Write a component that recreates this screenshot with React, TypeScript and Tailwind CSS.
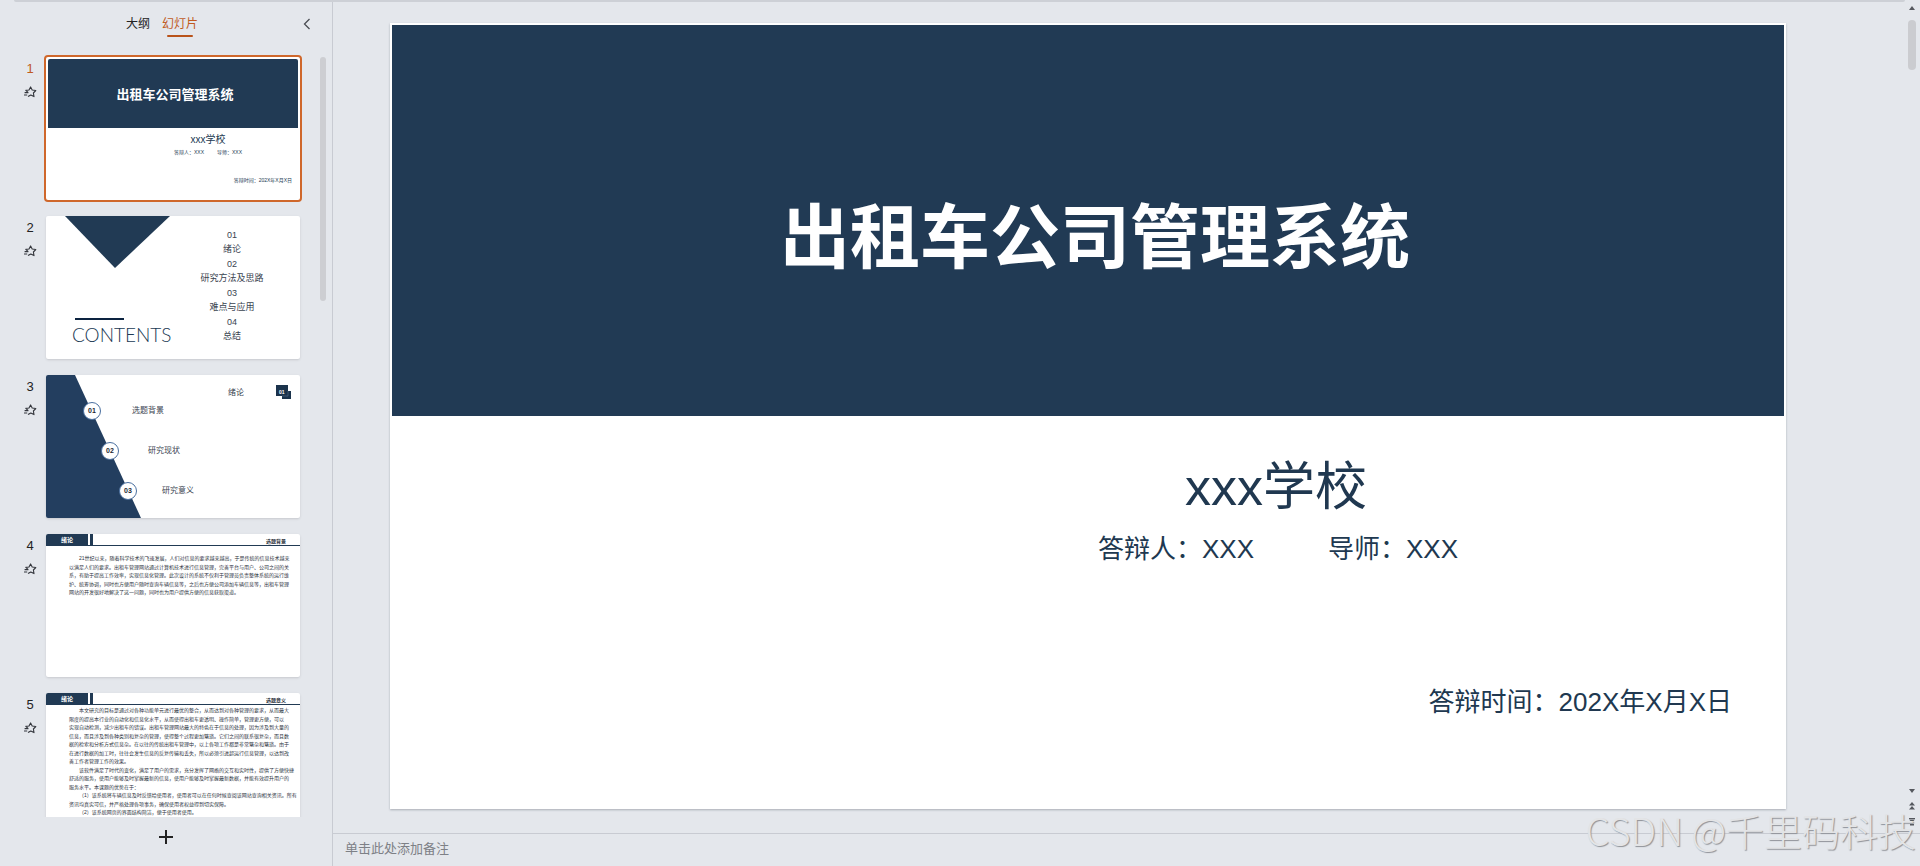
import type { ReactNode } from 'react';

const goals = [
  { no: '01', label: '选题背景', row: 'ml-[37px] gap-[31px]' },
  { no: '02', label: '研究现状', row: 'ml-[55px] gap-[29px]' },
  { no: '03', label: '研究意义', row: 'ml-[73px] gap-[25px]' },
];

const contents = ['01', '绪论', '02', '研究方法及思路', '03', '难点与应用', '04', '总结'];

const background = [
  { text: '21世纪以来，随着科学技术的飞速发展，人们对信息的要求越来越高，于是传统的信息技术越来', indent: true },
  { text: '以满足人们的要求。出租车管理网站通过计算机技术进行信息管理，完善平台与用户、公司之间的关' },
  { text: '系，有助于提高工作效率，实现信息化管理。此次设计的系统不仅利于管理员负责整体系统的运行维' },
  { text: '护、统筹协调，同时也方便用户随时查询车辆信息等，之后也方便公司添加车辆信息等，出租车管理' },
  { text: '网站的开发很好地解决了这一问题，同时也为用户提供方便的信息获取渠道。' },
];

const meaning = [
  { text: '本文研究的目标是通过对各种功能单元进行最优的整合，从而达到对各种管理的要求，从而最大', indent: true },
  { text: '限度的提高本行业的自动化和信息化水平，从而使得出租车更透明、操作简单，管理更方便，可以' },
  { text: '实现自动检测，减少出租车的错误。出租车管理网站最大的特色在于信息的处理，因为涉及到大量的' },
  { text: '信息，而且涉及到各种类别和复杂的管理，使得整个过程更加繁琐。它们之间的联系很复杂，而且数' },
  { text: '据的检索和分析方式信息杂。在以往的传统出租车管理中，以上各项工作都是非常繁杂和繁琐。由于' },
  { text: '在进行数据的加工时，往往会发生信息的反复传输和丢失，所以必须引进超运行信息管理，以达到改' },
  { text: '善工作者管理工作的效果。' },
  { text: '该软件满足了时代的变化，满足了用户的需求，充分发挥了网络的交互和实时性，提供了方便快捷', indent: true },
  { text: '舒适的服务，使用户能够及时掌握最新的信息，使用户能够及时掌握最新数据，并能有效提升用户的' },
  { text: '服务水平。本课题的优势在于：' },
  { text: '（1）该系统将车辆信息及时反馈给使用者，使用者可以在任何时候查阅该网站查询相关资讯。所有', indent: true },
  { text: '资讯均真实可信，并严格处理各项事务，确保使用者权益得到切实保障。' },
  { text: '（2）该系统网页的界面结构简洁，便于使用者使用。', indent: true },
];

const AnimationIcon = () => (
  <svg width="13" height="12" viewBox="0 0 13 12" fill="none" stroke="#33363c" strokeWidth="1.1" strokeLinejoin="round">
    <path d="M4 6.4 1.8 4.4 5 4 6.6 0.9 8.2 4 11.8 4.5 9.4 7 10 10.6 6.8 9 4 10.6" />
    <path d="M0.6 6.6h3.8M0 9h3.2" />
  </svg>
);

const TitleThumb = () => (
  <div className="flex h-full flex-col overflow-hidden text-[#203850]">
    <div className="flex h-[69px] items-center justify-center rounded-t-xs bg-[#213a54] pl-1 pt-0.5">
      <span className="text-[13px] font-bold text-white">出租车公司管理系统</span>
    </div>
    <div className="pl-[70px] pt-1 text-center">
      <p className="text-[10px] leading-[16px]">xxx学校</p>
      <p className="flex justify-center gap-[13px] text-[5px] leading-[8px]">
        <span>答辩人：XXX</span>
        <span>导师：XXX</span>
      </p>
    </div>
    <p className="mt-5 pr-[6px] text-right text-[5px] leading-[8px]">答辩时间：202X年X月X日</p>
  </div>
);

const ContentsThumb = () => (
  <div className="flex h-full pr-3">
    <div className="w-[130px]">
      <svg className="ml-[19px] block" width="105" height="52" viewBox="0 0 105 52">
        <path d="M0 0h105L50 52z" fill="#213a54" />
      </svg>
      <div className="ml-[29px] mt-[50px] h-[2px] w-[49px] bg-[#0c2340]" />
      <p className="ml-[26px] mt-[3px] font-[Lato] text-[19px] font-light leading-[24px] text-[#213a54]">CONTENTS</p>
    </div>
    <ul className="flex h-[127px] flex-1 flex-col justify-between pt-[12px] text-center text-[9px] leading-[14px] text-[#3a4350]">
      {contents.map((item) => (
        <li key={item} className="whitespace-nowrap">
          {item}
        </li>
      ))}
    </ul>
  </div>
);

const SectionThumb = () => (
  <div className="relative h-full text-[8px] text-[#3a4350]">
    <svg className="absolute inset-0" width="254" height="143" viewBox="0 0 254 143">
      <path d="M0 0h29L95 143H0z" fill="#233e5f" />
      <path d="M230 10h12v6h3v8h-9v-3h-6z" fill="#1b334c" />
      <path d="M242 16v5h-6" stroke="#5b7189" strokeWidth="0.6" fill="none" />
    </svg>
    <span className="absolute left-[233px] top-[13px] text-[5px] font-bold leading-[8px] text-white">01</span>
    <span className="absolute left-[182px] top-[12px] leading-[12px]">绪论</span>
    <ul className="relative pt-4">
      {goals.map((goal) => (
        <li key={goal.no} className={`flex h-10 items-center ${goal.row}`}>
          <span className="flex size-[18px] items-center justify-center rounded-full border border-[#4a6f9f] bg-white text-[7px] font-bold text-[#1c2733]">
            {goal.no}
          </span>
          <span>{goal.label}</span>
        </li>
      ))}
    </ul>
  </div>
);

const TextThumb = ({ title, children }: { title: string; children: ReactNode }) => (
  <div className="h-full text-[5px] text-[#2c323c]">
    <div className="flex h-3 border-b border-[#213a54]">
      <span className="flex w-[42px] items-center justify-center bg-[#213a54] text-[6px] font-bold leading-[8px] text-white">
        绪论
      </span>
      <span className="ml-[2px] w-[3px] bg-[#213a54]" />
      <span className="ml-auto mr-[14px] self-end font-bold leading-[7px]">{title}</span>
    </div>
    {children}
  </div>
);

const Lines = ({ lines }: { lines: { text: string; indent?: boolean }[] }) => (
  <>
    {lines.map((line) => (
      <p key={line.text} className={`whitespace-nowrap leading-[8px] ${line.indent ? 'pl-[10px]' : ''}`}>
        {line.text}
      </p>
    ))}
  </>
);

const slides = [
  <TitleThumb />,
  <ContentsThumb />,
  <SectionThumb />,
  <TextThumb title="选题背景">
    <div className="ml-[23px] mt-2 flex h-[42px] flex-col justify-between">
      <Lines lines={background} />
    </div>
  </TextThumb>,
  <TextThumb title="选题意义">
    <div className="ml-[23px] mt-px flex h-[110px] flex-col justify-between">
      <Lines lines={meaning} />
    </div>
  </TextThumb>,
];

const Sidebar = () => (
  <aside className="flex w-[333px] shrink-0 flex-col border-r border-[#c8cbd2]">
    <header className="relative flex h-12 items-center justify-center gap-3 pr-2 text-[12px] leading-[24px]">
      <button className="text-[#222]">大纲</button>
      <button className="relative text-[#c05a1e]">
        幻灯片
        <span className="absolute inset-x-[5px] bottom-[-1px] h-[2px] rounded-full bg-[#b9531a]" />
      </button>
      <button aria-label="收起" className="absolute right-[20px] top-[17px]">
        <svg width="10" height="14" viewBox="0 0 10 14" fill="none" stroke="#4a4d53" strokeWidth="1.3">
          <path d="M7.5 2 2.5 7l5 5" />
        </svg>
      </button>
    </header>
    <div className="flex min-h-0 flex-1 overflow-hidden pr-[6px]">
      <ol className="flex flex-1 flex-col gap-4 pl-4 pt-[9px]">
        {slides.map((slide, index) => (
          <li key={index} className="flex gap-0.5">
            <div className={`flex w-7 flex-col items-center ${index === 0 ? 'text-[#c05a1e]' : 'text-[#222]'}`}>
              <span className="text-[13px] leading-[24px]">{index + 1}</span>
              <span className="mt-[5px]">
                <AnimationIcon />
              </span>
            </div>
            {index === 0 ? (
              <div className="-m-0.5 h-[147px] w-[258px] rounded border-2 border-[#cf672b] bg-white p-0.5">{slide}</div>
            ) : (
              <div className="h-[143px] w-[254px] overflow-hidden rounded-xs bg-white shadow-sm">{slide}</div>
            )}
          </li>
        ))}
      </ol>
      <div className="mt-[9px] h-[244px] w-1.5 rounded-full bg-[#cdced2]" />
    </div>
    <footer className="flex h-[49px] items-start justify-center pt-3">
      <button aria-label="新建幻灯片">
        <svg width="16" height="16" viewBox="0 0 16 16" stroke="#222" strokeWidth="2">
          <path d="M8 1v14M1 8h14" />
        </svg>
      </button>
    </footer>
  </aside>
);

const Slide = () => (
  <section className="flex flex-1 flex-col bg-white p-[2px] text-[#203850] shadow-[0_1px_2px_#a9adb5]">
    <div className="flex h-1/2 items-center justify-center bg-[#213a54] pl-3.5 pt-9">
      <h1 className="text-[70px] font-bold leading-[96px] text-white">出租车公司管理系统</h1>
    </div>
    <div className="pl-[376px] pt-[35px] text-center">
      <p className="text-[52px] leading-[72px]">xxx学校</p>
      <p className="mt-1.5 flex justify-center gap-[74px] pl-1 text-[26px] leading-[40px]">
        <span>答辩人：XXX</span>
        <span>导师：XXX</span>
      </p>
    </div>
    <p className="mt-[113px] pr-[52px] text-right text-[26px] leading-[40px]">答辩时间：202X年X月X日</p>
  </section>
);

const ScrollBar = () => (
  <div className="flex w-4 shrink-0 flex-col items-center pb-10 pt-[5px]">
    <button aria-label="向上滚动">
      <svg className="block" width="6" height="6" viewBox="0 0 6 6" fill="#55585e">
        <path d="M3 1 6 5H0z" />
      </svg>
    </button>
    <div className="mt-[9px] h-[50px] w-2 rounded-full bg-[#cbccd0]" />
    <div className="mt-auto flex flex-col items-center gap-2">
      <button aria-label="向下滚动">
        <svg className="block" width="6" height="6" viewBox="0 0 6 6" fill="#55585e">
          <path d="M3 5 0 1h6z" />
        </svg>
      </button>
      <button aria-label="上一张">
        <svg className="block" width="6" height="8" viewBox="0 0 6 8" fill="#55585e">
          <path d="M3 0 6 3.6H0zM3 4 6 7.6H0z" />
        </svg>
      </button>
      <button aria-label="下一张">
        <svg className="block" width="6" height="8" viewBox="0 0 6 8" fill="#55585e">
          <path d="M0 0h6v1H0zM3 4.6 0 1.4h6zM1 6h4v1.4H1z" />
        </svg>
      </button>
    </div>
  </div>
);

const App = () => (
  <div className="relative flex h-screen overflow-hidden bg-[#e4e7ec] font-['Liberation_Sans','Noto_Sans_CJK_SC',sans-serif]">
    <div className="absolute left-[14px] right-[15px] top-0 h-[2px] rounded-b bg-[#cdd0d6]" />
    <Sidebar />
    <main className="flex min-w-0 flex-1 flex-col">
      <div className="flex min-h-0 flex-1">
        <div className="flex flex-1 pb-6 pl-[57px] pr-[118px] pt-[23px]">
          <Slide />
        </div>
        <div className="-mb-[33px] flex">
          <ScrollBar />
        </div>
      </div>
      <div className="flex h-[33px] border-t border-[#c8cbd2] pl-3">
        <input
          aria-label="备注"
          placeholder="单击此处添加备注"
          className="h-7 flex-1 bg-transparent text-[13px] outline-none placeholder:text-[#7d8086]"
        />
      </div>
    </main>
    <div className="pointer-events-none absolute bottom-2 right-1 whitespace-nowrap font-['Noto_Sans_CJK_SC',sans-serif] text-[38px] font-light leading-[56px] text-[#e3e4e6] [text-shadow:1px_1px_1px_#8f9298]">
      CSDN @千里码科技
    </div>
  </div>
);

export default App;
